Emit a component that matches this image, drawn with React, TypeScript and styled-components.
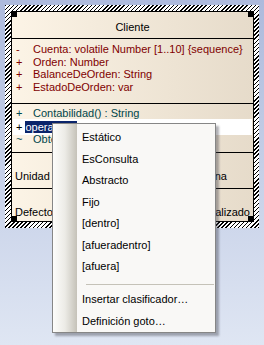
import styled, { createGlobalStyle } from "styled-components";

const GlobalStyle = createGlobalStyle`
    html, body {
        margin: 0;
        padding: 0;
    }
    body {
        width: 264px;
        height: 345px;
        overflow: hidden;
        background: linear-gradient(to bottom, #adbadc, #dfe6f3);
        font-family: "Liberation Sans", Arial, sans-serif;
    }
`;

const Canvas = styled.div`
    position: relative;
    width: 264px;
    height: 345px;
    padding: 5px;
    box-sizing: border-box;
`;

const Selection = styled.div`
    width: 254px;
    box-sizing: border-box;
    padding: 6px 5px 6px 6px;
    background: repeating-linear-gradient(135deg, #000 0 1.1px, #fff 1.1px 2.9px);
`;

const ClassBox = styled.div`
    position: relative;
    border: 1px solid #000;
    background: linear-gradient(to right, #fcf4e6, #e6dbca);
    font-size: 11px;
`;

const Handle = styled.div<{ $right?: boolean; $bottom?: boolean }>`
    position: absolute;
    width: 6px;
    height: 6px;
    background: #000;
    ${(p) => (p.$right ? "right: -1px;" : "left: -1px;")}
    ${(p) => (p.$bottom ? "bottom: -1px;" : "top: -1px;")}
`;

const Compartment = styled.div<{ $h: number; $pt: number; $last?: boolean }>`
    height: ${(p) => p.$h}px;
    padding-top: ${(p) => p.$pt}px;
    box-sizing: border-box;
    border-bottom: ${(p) => (p.$last ? "none" : "1px solid #000")};
    box-sizing: content-box;
    height: ${(p) => p.$h - p.$pt}px;
    overflow: hidden;
`;

const Title = styled.div`
    text-align: center;
    line-height: 22px;
    color: #000;
`;

const Row = styled.div<{ $color: string; $lh: number }>`
    display: flex;
    color: ${(p) => p.$color};
    line-height: ${(p) => p.$lh}px;
    padding-left: 3px;
    white-space: nowrap;
`;

const Scope = styled.span`
    width: 18px;
    flex: none;
    text-align: left;
    padding-left: 1px;
    box-sizing: border-box;
`;

const EditRow = styled.div`
    height: 14px;
`;

const EditBox = styled.div`
    margin: -1px 1px 0 1px;
    height: 16px;
    background: #fff;
    display: flex;
    align-items: center;
    padding-left: 3px;
    color: #000;
    white-space: nowrap;
    line-height: 12px;
`;

const Selected = styled.span`
    background: #0a246a;
    color: #fff;
    margin-left: 3px;
    padding: 0 0 0 0;
`;

const TaggedRow = styled.div<{ $pr: number }>`
    display: flex;
    justify-content: space-between;
    line-height: 13px;
    padding: 0 ${(p) => p.$pr}px 0 3px;
    color: #000;
    white-space: nowrap;
`;

const Menu = styled.div`
    position: absolute;
    left: 52px;
    top: 123px;
    width: 164px;
    box-sizing: border-box;
    border: 1px solid #868686;
    padding: 3px 0 0 0;
    background: linear-gradient(to right, #fdfdfb 0, #ecebe6 12px, #c5c2b8 24px, #f9f8f6 24px);
    box-shadow: 3px 3px 2px rgba(60, 60, 70, 0.4);
    font-size: 11px;
    color: #000;
`;

const MenuItem = styled.div`
    height: 21.5px;
    line-height: 21.5px;
    padding-left: 29px;
    white-space: nowrap;
`;

const Separator = styled.div`
    height: 1px;
    margin: 6.5px 1px 4px 33px;
    background: #c5c2b8;
`;

const attrs = [
    { s: "-", t: "Cuenta: volatile Number [1..10] {sequence}" },
    { s: "+", t: "Orden: Number" },
    { s: "+", t: "BalanceDeOrden: String" },
    { s: "+", t: "EstadoDeOrden: var" },
];

const menuItems = ["Estático", "EsConsulta", "Abstracto", "Fijo", "[dentro]", "[afueradentro]", "[afuera]"];

export default function App() {
    return (
        <>
            <GlobalStyle />
            <Canvas>
                <Selection>
                    <ClassBox>
                        <Compartment $h={26} $pt={4}>
                            <Title>Cliente</Title>
                        </Compartment>
                        <Compartment $h={64} $pt={4}>
                            {attrs.map((a) => (
                                <Row key={a.t} $color="#800000" $lh={12.5}>
                                    <Scope>{a.s}</Scope>
                                    {a.t}
                                </Row>
                            ))}
                        </Compartment>
                        <Compartment $h={48} $pt={2.5}>
                            <Row $color="#00464b" $lh={13}>
                                <Scope>+</Scope>
                                Contabilidad() : String
                            </Row>
                            <EditRow>
                                <EditBox>
                                    +<Selected>operation1</Selected>&nbsp;Opcional() : void
                                </EditBox>
                            </EditRow>
                            <Row $color="#00464b" $lh={13}>
                                <Scope>~</Scope>
                                ObtenerSaldo() : Number
                            </Row>
                        </Compartment>
                        <Compartment $h={35} $pt={16.5}>
                            <TaggedRow $pr={26}>
                                <span>Unidad de trabajo:</span>
                                <span>Ninguna</span>
                            </TaggedRow>
                        </Compartment>
                        <Compartment $h={32} $pt={16.5} $last>
                            <TaggedRow $pr={3}>
                                <span>Defecto:</span>
                                <span>No normalizado</span>
                            </TaggedRow>
                        </Compartment>
                        <Handle />
                        <Handle $right />
                        <Handle $bottom />
                        <Handle $right $bottom />
                    </ClassBox>
                </Selection>
                <Menu>
                    {menuItems.map((m) => (
                        <MenuItem key={m}>{m}</MenuItem>
                    ))}
                    <Separator />
                    <MenuItem>Insertar clasificador…</MenuItem>
                    <MenuItem>Definición goto…</MenuItem>
                </Menu>
            </Canvas>
        </>
    );
}
